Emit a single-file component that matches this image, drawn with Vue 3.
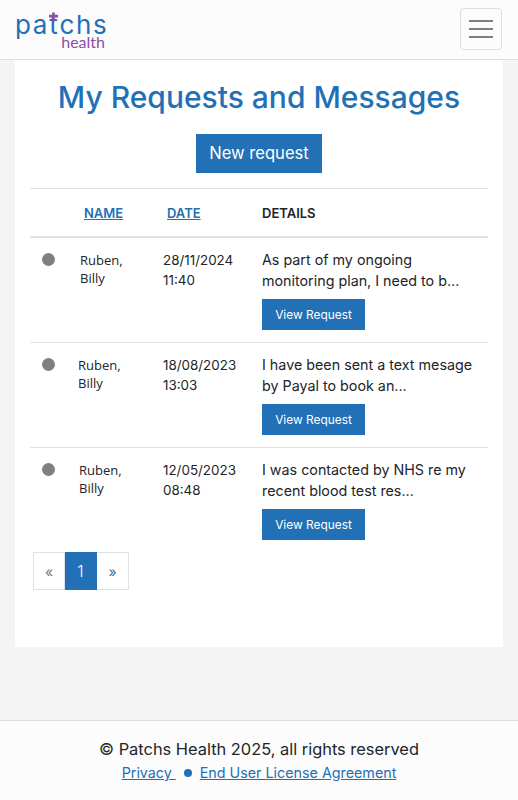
<script setup>
const rows = [
  { name: 'Ruben,', last: 'Billy', nameX: 50, d: '28/11/2024', t: '11:40', a: 'As part of my ongoing', b: 'monitoring plan, I need to b...' },
  { name: 'Ruben,', last: 'Billy', nameX: 48, d: '18/08/2023', t: '13:03', a: 'I have been sent a text mesage', b: 'by Payal to book an...' },
  { name: 'Ruben,', last: 'Billy', nameX: 49, d: '12/05/2023', t: '08:48', a: 'I was contacted by NHS re my', b: 'recent blood test res...' }
]
</script>

<template>
  <div class="page">
    <header class="nav">
      <div class="logo">
        <div class="logo-main">pa<span class="logo-t">t<svg class="plus" viewBox="0 0 10 10"><path d="M5 0v10M0 4h10" /></svg></span>chs</div>
        <div class="logo-sub">health</div>
      </div>
      <button class="burger" aria-label="Menu">
        <span></span><span></span><span></span>
      </button>
    </header>
    <main class="card">
      <h1>My Requests and Messages</h1>
      <div class="cta"><a class="new">New request</a></div>
      <div class="head">
        <span class="hname">NAME</span>
        <span class="hdate">DATE</span>
        <span class="hdet">DETAILS</span>
      </div>
      <div v-for="r in rows" :key="r.d" class="row">
        <div class="dot"></div>
        <div class="name" :style="{ paddingLeft: r.nameX - 25 + 'px' }">{{ r.name }}<br />{{ r.last }}</div>
        <div class="date">{{ r.d }}<br />{{ r.t }}</div>
        <div class="det">
          <p>{{ r.a }}<br />{{ r.b }}</p>
          <a class="view">View Request</a>
        </div>
      </div>
      <nav class="pager">
        <span class="pg muted">«</span><span class="pg on">1</span><span class="pg link">»</span>
      </nav>
    </main>
    <footer class="foot">
      <div class="copy">© Patchs Health 2025, all rights reserved</div>
      <div class="links"><a>Privacy&nbsp;</a><i></i><a>End User License Agreement</a></div>
    </footer>
  </div>
</template>

<style>
html, body { margin: 0; background: #f4f4f4; }
</style>

<style scoped>
.page { height: 800px; display: flex; flex-direction: column; background: #f4f4f4; font-family: Inter, "Open Sans", sans-serif; color: #212529; overflow: hidden; }
.nav { height: 59px; flex: none; background: #fcfcfc; border-bottom: 1px solid #dedede; display: flex; justify-content: space-between; align-items: flex-start; padding: 0 16px 0 15px; }
.logo { padding-top: 11px; width: 90px; line-height: 1; }
.logo-main { font-size: 26px; letter-spacing: 1.7px; color: #2270b5; height: 24px; line-height: 27px; white-space: nowrap; }
.logo-t { position: relative; }
.plus { position: absolute; left: 0; top: 3px; width: 9px; height: 10px; }
.plus path { stroke: #8c4fa5; stroke-width: 3; fill: none; }
.logo-sub { font-family: Lato, sans-serif; font-size: 16px; color: #8c4fa5; text-align: right; height: 14px; line-height: 14px; }
.burger { margin-top: 8px; width: 42px; height: 42px; box-sizing: border-box; border: 1px solid #dedede; border-radius: 4px; background: transparent; padding: 0; display: flex; flex-direction: column; align-items: center; justify-content: center; gap: 6px; }
.burger span { width: 24px; height: 2px; background: #808080; }
.card { margin: 0 15px; height: 587px; flex: none; background: #fff; padding: 0 15px; box-sizing: border-box; }
h1 { margin: 0; padding-top: 17px; height: 74px; box-sizing: border-box; font-weight: 500; font-size: 30px; line-height: 40px; color: #2270b5; text-align: center; }
.cta { text-align: center; height: 54px; }
.new { display: inline-block; width: 126px; height: 39px; line-height: 39px; background: #2270b5; color: #fff; font-size: 16.6px; }
.head { height: 47px; border-top: 1px solid #dee2e6; border-bottom: 2px solid #dee2e6; display: flex; align-items: center; font-size: 13px; font-weight: 600; }
.hname { margin-left: 54px; color: #2270b5; text-decoration: underline; width: 83px; }
.hdate { color: #2270b5; text-decoration: underline; width: 95px; }
.hdet { color: #212529; }
.row { display: flex; height: 104px; border-bottom: 1px solid #dee2e6; }
.row:last-of-type { border-bottom: 0; }
.dot { width: 13px; height: 13px; border-radius: 50%; background: #808080; margin: 15px 0 0 12px; flex: none; }
.name { flex: none; width: 108px; box-sizing: border-box; font-family: "Open Sans", sans-serif; font-size: 13px; line-height: 18px; padding-top: 13px; }
.date { flex: none; width: 99px; font-size: 13.4px; line-height: 20px; padding-top: 12px; }
.det { padding-top: 11px; font-size: 14.3px; line-height: 21px; }
.det p { margin: 0 0 8px; white-space: nowrap; }
.view { display: block; width: 103px; height: 31px; line-height: 31px; background: #2270b5; color: #fff; font-size: 11.9px; text-align: center; }
.pager { display: flex; margin: 0 0 0 3px; }
.pg { width: 32px; height: 38px; box-sizing: border-box; border: 1px solid #dee2e6; display: flex; align-items: center; justify-content: center; font-size: 14px; }
.pg + .pg { border-left: 0; }
.muted { color: #6c757d; }
.on { background: #2270b5; border-color: #2270b5; color: #fff; font-weight: 300; font-size: 16px; }
.link { color: #2270b5; }
.foot { margin-top: 73px; height: 80px; box-sizing: border-box; border-top: 1px solid #dedede; background: #fcfcfc; text-align: center; padding-top: 17px; font-size: 16.4px; line-height: 22px; flex: none; }
.links { font-size: 14.3px; color: #2270b5; display: flex; justify-content: center; align-items: center; gap: 8px; margin-top: 2px; }
.links a { text-decoration: underline; }
.links i { width: 8px; height: 8px; border-radius: 50%; background: #2270b5; }
</style>
